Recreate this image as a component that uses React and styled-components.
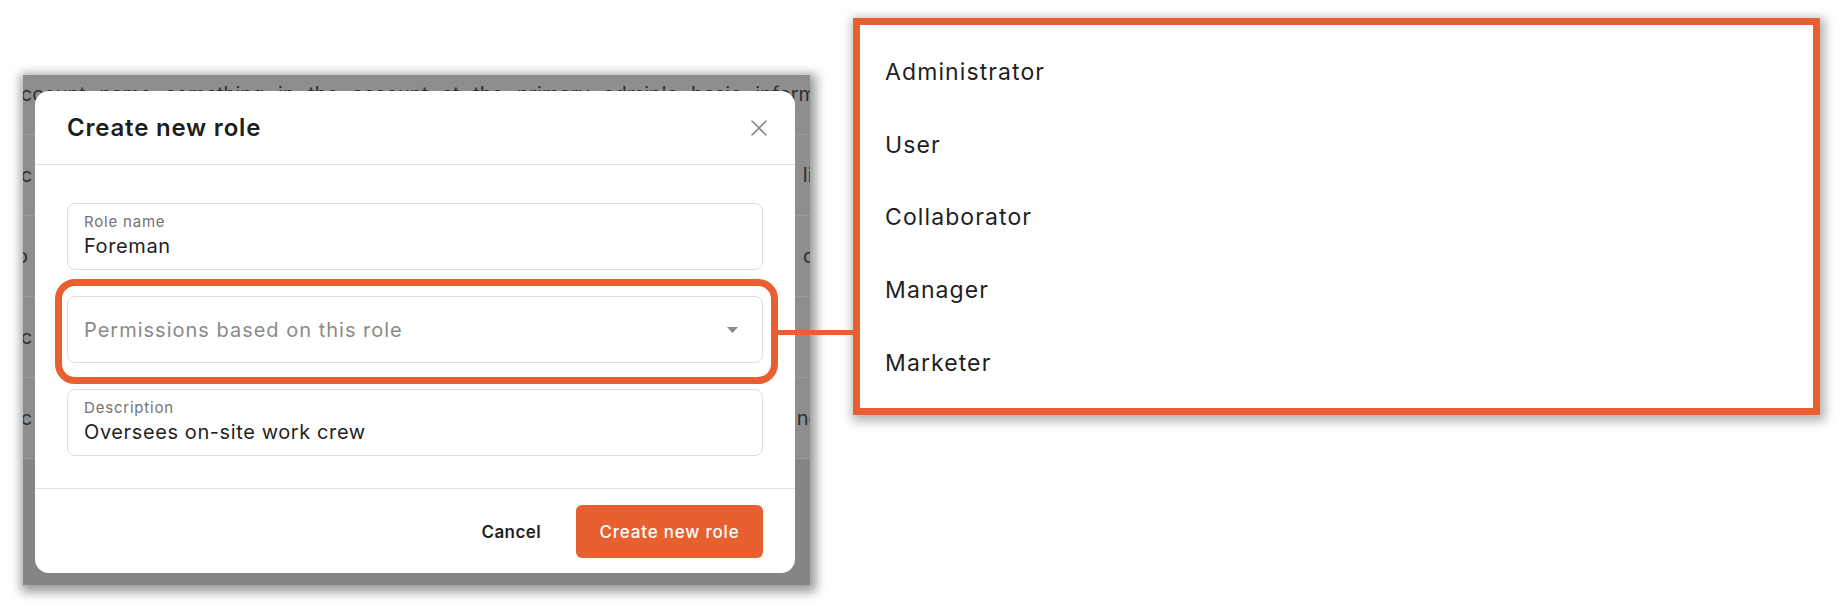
import React from "react";
import styled, { createGlobalStyle } from "styled-components";

const ORANGE = "#e8602f";

const GlobalStyle = createGlobalStyle`
  html, body {
    margin: 0;
    padding: 0;
    background: #ffffff;
  }
  body {
    font-family: Inter, "Open Sans", "Liberation Sans", sans-serif;
    color: #222;
  }
  * {
    box-sizing: border-box;
  }
`;

const backdropRows = [
  { left: "iccount name  something in the account  at the primary admin's basic information", right: "" },
  { left: "ic", right: "lir" },
  { left: "o", right: "di" },
  { left: "ic", right: "" },
  { left: "ic", right: "nc" },
];

const roles = ["Administrator", "User", "Collaborator", "Manager", "Marketer"];

export default function App() {
  return (
    <>
      <GlobalStyle />
      <Page>
        <Frame>
          <Backdrop>
            {backdropRows.map((row, i) => (
              <BackRow key={i} first={i === 0}>
                <BackText>{row.left}</BackText>
                <BackText>{row.right}</BackText>
              </BackRow>
            ))}
          </Backdrop>

          <Modal>
            <ModalHeader>
              <Title>Create new role</Title>
              <CloseButton aria-label="Close">
                <svg width="18" height="18" viewBox="0 0 18 18" fill="none">
                  <path d="M2 2L16 16M16 2L2 16" stroke="#8a8a8a" strokeWidth="1.6" strokeLinecap="round" />
                </svg>
              </CloseButton>
            </ModalHeader>

            <ModalBody>
              <Field>
                <Label>Role name</Label>
                <Value>Foreman</Value>
              </Field>

              <SelectWrap>
                <Select>
                  <Placeholder>Permissions based on this role</Placeholder>
                  <svg width="11" height="6" viewBox="0 0 11 6">
                    <path d="M0 0H11L5.5 6Z" fill="#8a8a8a" />
                  </svg>
                </Select>
                <Highlight />
              </SelectWrap>

              <Field>
                <Label>Description</Label>
                <Value>Oversees on-site work crew</Value>
              </Field>
            </ModalBody>

            <ModalFooter>
              <CancelButton>Cancel</CancelButton>
              <PrimaryButton>Create new role</PrimaryButton>
            </ModalFooter>
          </Modal>
        </Frame>

        <Connector />

        <Dropdown>
          {roles.map((r) => (
            <Option key={r}>{r}</Option>
          ))}
        </Dropdown>
      </Page>
    </>
  );
}

const Page = styled.div`
  position: relative;
  display: flex;
  align-items: flex-start;
  gap: 43px;
  width: 1848px;
  height: 606px;
  padding-left: 23px;
`;

const Frame = styled.div`
  position: relative;
  margin-top: 75px;
  width: 787px;
  height: 510px;
  overflow: hidden;
  background: #858585;
  box-shadow: 2px 3px 10px 4px rgba(0, 0, 0, 0.4);
`;

const Backdrop = styled.div`
  display: flex;
  flex-direction: column;
  background: #8e8e8e;
`;

const BackRow = styled.div`
  display: flex;
  justify-content: space-between;
  align-items: ${({ first }) => (first ? "flex-start" : "center")};
  height: ${({ first }) => (first ? "60px" : "81px")};
  padding-top: ${({ first }) => (first ? "7px" : "0")};
  margin-left: -7px;
  margin-right: -10px;
  border-bottom: 1px solid #9c9c9c;
`;

const BackText = styled.span`
  font-size: 20px;
  color: #2e2e2e;
  white-space: nowrap;
  word-spacing: 8px;
`;

const Modal = styled.div`
  position: absolute;
  left: 12px;
  top: 16px;
  width: 760px;
  height: 482px;
  display: flex;
  flex-direction: column;
  background: #fff;
  border-radius: 14px;
`;

const ModalHeader = styled.div`
  height: 74px;
  display: flex;
  align-items: center;
  justify-content: space-between;
  padding: 0 27px 0 32px;
  border-bottom: 1px solid #e2e2e2;
`;

const Title = styled.h2`
  margin: 0;
  font-size: 24px;
  font-weight: 600;
  color: #1e1e1e;
  letter-spacing: 0.8px;
`;

const CloseButton = styled.button`
  display: flex;
  padding: 0;
  border: none;
  background: none;
  cursor: pointer;
`;

const ModalBody = styled.div`
  display: flex;
  flex-direction: column;
  gap: 26px;
  padding: 38px 32px 32px;
`;

const Field = styled.div`
  height: 67px;
  display: flex;
  flex-direction: column;
  padding: 9px 16px 0;
  border: 1px solid #dcdcdc;
  border-radius: 8px;
  background: #fff;
`;

const Label = styled.span`
  font-size: 15px;
  line-height: 18px;
  color: #737373;
  letter-spacing: 0.8px;
`;

const Value = styled.span`
  margin-top: 2px;
  font-size: 20px;
  line-height: 26px;
  color: #1f1f1f;
  letter-spacing: 0.6px;
`;

const SelectWrap = styled.div`
  position: relative;
`;

const Select = styled.div`
  height: 67px;
  display: flex;
  align-items: center;
  justify-content: space-between;
  padding: 0 24px 0 16px;
  border: 1px solid #dcdcdc;
  border-radius: 8px;
  background: #fff;
`;

const Placeholder = styled.span`
  font-size: 20px;
  color: #8a8a8a;
  letter-spacing: 1px;
`;

const Highlight = styled.div`
  position: absolute;
  left: -12px;
  right: -15px;
  top: -17px;
  bottom: -21px;
  border: 7px solid ${ORANGE};
  border-radius: 20px;
  pointer-events: none;
`;

const ModalFooter = styled.div`
  display: flex;
  justify-content: flex-end;
  align-items: center;
  padding: 16px 32px 14px;
  border-top: 1px solid #e2e2e2;
`;

const CancelButton = styled.button`
  height: 53px;
  padding: 0 16px;
  margin-right: 19px;
  border: none;
  background: none;
  font-family: inherit;
  font-size: 17px;
  font-weight: 600;
  letter-spacing: 0.4px;
  color: #1f1f1f;
  cursor: pointer;
`;

const PrimaryButton = styled.button`
  height: 53px;
  width: 187px;
  border: none;
  border-radius: 6px;
  background: ${ORANGE};
  font-family: inherit;
  font-size: 17px;
  font-weight: 500;
  letter-spacing: 0.8px;
  color: #fff;
  cursor: pointer;
`;

const Connector = styled.div`
  position: absolute;
  left: 778px;
  top: 330px;
  width: 76px;
  height: 5px;
  background: ${ORANGE};
`;

const Dropdown = styled.div`
  margin-top: 18px;
  width: 967px;
  height: 397px;
  display: flex;
  flex-direction: column;
  padding: 11px 25px 9px;
  border: 7px solid ${ORANGE};
  background: #fff;
  box-shadow: 2px 3px 10px 3px rgba(0, 0, 0, 0.3);
`;

const Option = styled.div`
  height: 73px;
  display: flex;
  align-items: center;
  font-size: 23px;
  color: #1f1f1f;
  letter-spacing: 1.1px;
`;
